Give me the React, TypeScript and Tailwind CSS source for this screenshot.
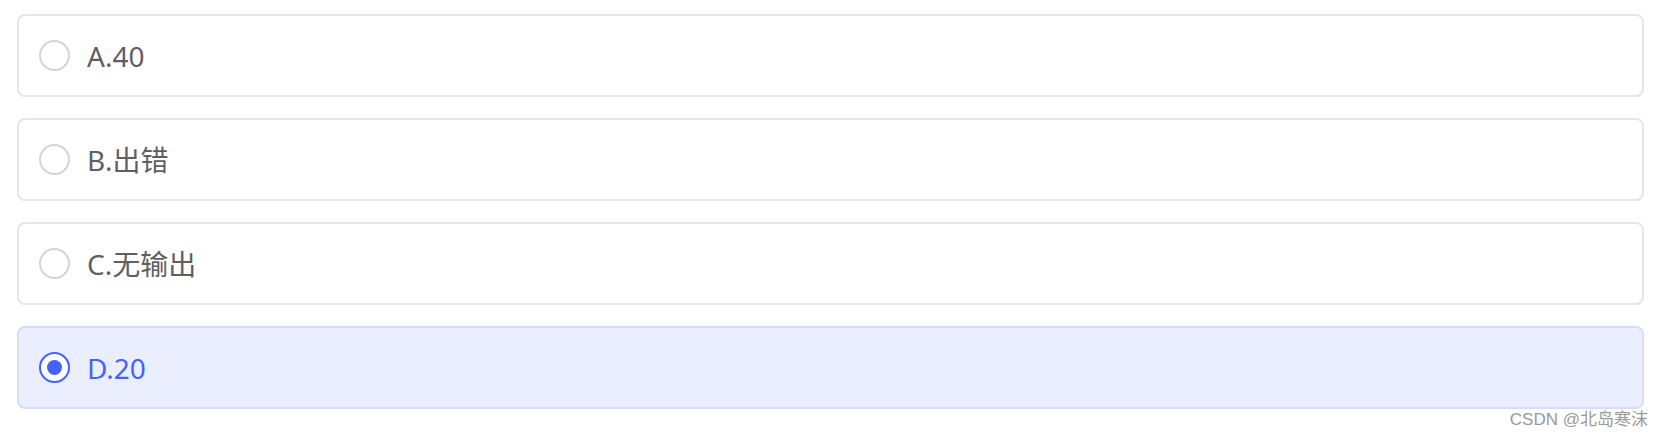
import React, { useState } from 'react';

const options = [
  { key: 'A', label: '40' },
  { key: 'B', label: '出错' },
  { key: 'C', label: '无输出' },
  { key: 'D', label: '20' },
];

const App: React.FC = () => {
  const [selected, setSelected] = useState('D');

  return (
    <div
      className="relative min-h-[437px] bg-white pt-[14px] pl-[17px] pr-[20px]"
      style={{ fontFamily: '"Noto Sans", "Noto Sans CJK SC", sans-serif' }}
    >
      <div className="flex flex-col gap-[21px]">
        {options.map((opt) => {
          const active = opt.key === selected;
          return (
            <button
              key={opt.key}
              onClick={() => setSelected(opt.key)}
              className={`flex h-[83px] items-center gap-[17px] rounded-[8px] border-2 pl-[20px] text-left ${
                active ? 'border-[#d6ddfc] bg-[#ebeeff]' : 'border-[#e6e6ea] bg-white'
              }`}
            >
              {/* radio circle */}
              <span
                className={`flex h-[31px] w-[31px] shrink-0 items-center justify-center rounded-full border-2 bg-white ${
                  active ? 'border-[#4562ff]' : 'border-[#d4d4d8]'
                }`}
              >
                {active && <span className="h-[15px] w-[15px] rounded-full bg-[#4562ff]" />}
              </span>
              <span className={`text-[28px] leading-none ${active ? 'text-[#4562ff]' : 'text-[#5f5f63]'}`}>
                {opt.key}.{opt.label}
              </span>
            </button>
          );
        })}
      </div>

      {/* watermark */}
      <div
        className="absolute bottom-[9px] right-[16px] text-[17px] leading-none text-[#9a9a9a]"
        style={{ fontFamily: '"Liberation Sans", "Noto Sans CJK SC", sans-serif' }}
      >
        CSDN @北岛寒沫
      </div>
    </div>
  );
};

export default App;
